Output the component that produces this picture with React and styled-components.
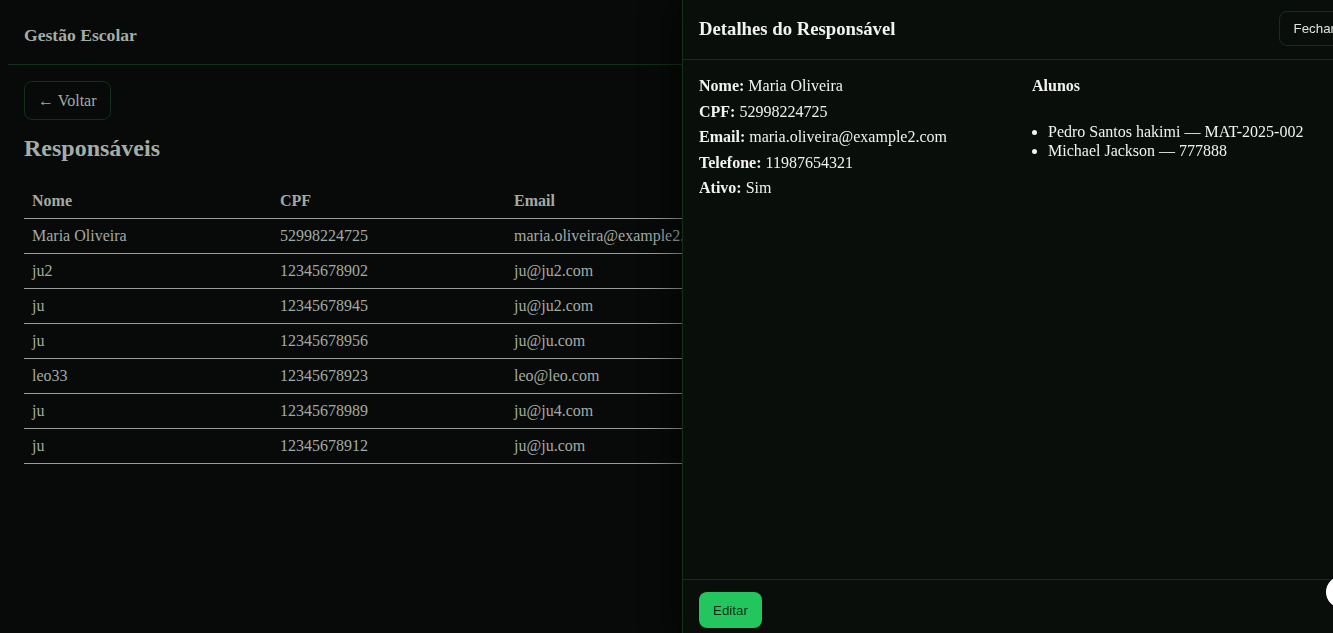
import React from "react";
import styled, { createGlobalStyle } from "styled-components";

const Global = createGlobalStyle`
  html { background: #070a08; overflow: hidden; }
  body {
    margin: 8px;
    background: #070a08;
    color: #a3aaa4;
    font-family: "Liberation Serif", "Times New Roman", serif;
    font-size: 16px;
  }
`;

const Header = styled.header`
  height: 56px;
  display: flex;
  align-items: center;
  padding: 0 16px 1px;
  box-sizing: border-box;
  height: 57px;
  border-bottom: 1px solid #12301b;
`;

const Brand = styled.div`
  font-weight: bold;
  font-size: 17.6px;
  color: #a4ada6;
`;

const Main = styled.main`
  padding: 16px;
`;

const GhostButton = styled.button`
  font-family: "Liberation Serif", serif;
  font-size: 16px;
  color: #a3aaa4;
  background: transparent;
  border: 1px solid #12301b;
  border-radius: 8px;
  height: 39px;
  padding: 0 13px;
  cursor: pointer;
`;

const Title = styled.h2`
  font-size: 24px;
  font-weight: bold;
  margin: 15px 0 22px;
  color: #a4ada6;
`;

const Table = styled.table`
  width: 100%;
  border-collapse: collapse;
`;

const Th = styled.th`
  text-align: left;
  font-weight: bold;
  padding: 8px;
  border-bottom: 1px solid #9a9d9a;
  width: ${(p) => p.$w || "auto"};
`;

const Td = styled.td`
  padding: 8px;
  border-bottom: 1px solid #9a9d9a;
`;

const Drawer = styled.aside`
  position: fixed;
  top: 0;
  bottom: -7px;
  right: -32px;
  width: 683px;
  background: #0a0e0b;
  border-left: 1px solid #12301b;
  box-shadow: -10px 0 30px rgba(0, 0, 0, 0.45);
  display: flex;
  flex-direction: column;
  color: #f1f2f1;
  box-sizing: border-box;
`;

const DrawerHead = styled.div`
  display: flex;
  align-items: center;
  justify-content: space-between;
  padding: 11px 16px 13px;
  border-bottom: 1px solid #12301b;
`;

const DrawerTitle = styled.h3`
  margin: 0;
  font-size: 18.72px;
  font-weight: bold;
  color: #f1f2f1;
`;

const CloseButton = styled.button`
  font-family: Arial, "Liberation Sans", sans-serif;
  font-size: 13.33px;
  color: #dfe3df;
  background: transparent;
  border: 1px solid #12301b;
  border-radius: 8px;
  padding: 9px 14px;
  margin-right: -1px;
  cursor: pointer;
`;

const DrawerBody = styled.div`
  flex: 1;
  padding: 17px 16px 16px;
  display: grid;
  grid-template-columns: 1fr 1fr;
  gap: 16px;
  align-content: start;
`;

const Field = styled.div`
  margin-bottom: 7.6px;
`;

const Label = styled.b`
  font-weight: bold;
`;

const SubTitle = styled.div`
  font-weight: bold;
  margin-bottom: 26.5px;
`;

const List = styled.ul`
  margin: 0;
  padding-left: 16px;
  line-height: 19px;
`;

const DrawerFoot = styled.div`
  padding: 12px 16px;
  border-top: 1px solid #12301b;
`;

const PrimaryButton = styled.button`
  font-family: Arial, "Liberation Sans", sans-serif;
  font-size: 13.33px;
  color: #0a2a14;
  background: #22c55e;
  border: none;
  border-radius: 8px;
  height: 36px;
  padding: 0 14px;
  cursor: pointer;
`;

const Bubble = styled.div`
  position: fixed;
  right: -25px;
  bottom: 25px;
  width: 32px;
  height: 32px;
  border-radius: 50%;
  background: #ffffff;
`;

const rows = [
  ["Maria Oliveira", "52998224725", "maria.oliveira@example2.com", "11987654321"],
  ["ju2", "12345678902", "ju@ju2.com", "11999999902"],
  ["ju", "12345678945", "ju@ju2.com", "11999999945"],
  ["ju", "12345678956", "ju@ju.com", "11999999956"],
  ["leo33", "12345678923", "leo@leo.com", "11999999923"],
  ["ju", "12345678989", "ju@ju4.com", "11999999989"],
  ["ju", "12345678912", "ju@ju.com", "11999999912"],
];

export default function App() {
  return (
    <>
      <Global />
      <Header>
        <Brand>Gestão Escolar</Brand>
      </Header>
      <Main>
        <GhostButton>← Voltar</GhostButton>
        <Title>Responsáveis</Title>
        <Table>
          <thead>
            <tr>
              <Th $w="232px">Nome</Th>
              <Th $w="218px">CPF</Th>
              <Th $w="300px">Email</Th>
              <Th>Telefone</Th>
              <Th>Ações</Th>
            </tr>
          </thead>
          <tbody>
            {rows.map((r, i) => (
              <tr key={i}>
                <Td>{r[0]}</Td>
                <Td>{r[1]}</Td>
                <Td>{r[2]}</Td>
                <Td>{r[3]}</Td>
                <Td>Ver</Td>
              </tr>
            ))}
          </tbody>
        </Table>
      </Main>
      <Drawer>
        <DrawerHead>
          <DrawerTitle>Detalhes do Responsável</DrawerTitle>
          <CloseButton>Fechar</CloseButton>
        </DrawerHead>
        <DrawerBody>
          <div>
            <Field><Label>Nome:</Label> Maria Oliveira</Field>
            <Field><Label>CPF:</Label> 52998224725</Field>
            <Field><Label>Email:</Label> maria.oliveira@example2.com</Field>
            <Field><Label>Telefone:</Label> 11987654321</Field>
            <Field><Label>Ativo:</Label> Sim</Field>
          </div>
          <div>
            <SubTitle>Alunos</SubTitle>
            <List>
              <li>Pedro Santos hakimi — MAT-2025-002</li>
              <li>Michael Jackson — 777888</li>
            </List>
          </div>
        </DrawerBody>
        <DrawerFoot>
          <PrimaryButton>Editar</PrimaryButton>
        </DrawerFoot>
      </Drawer>
      <Bubble />
    </>
  );
}
